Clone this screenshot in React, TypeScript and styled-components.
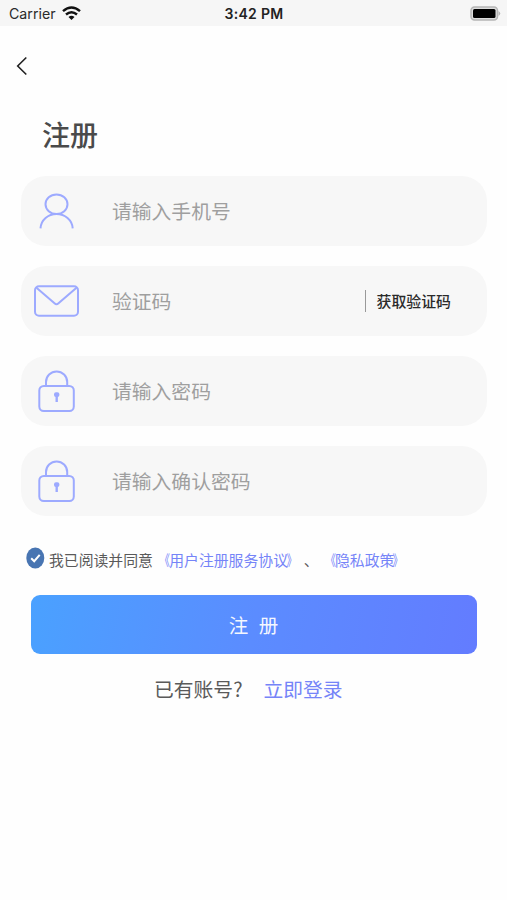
import React from "react";
import styled, { createGlobalStyle } from "styled-components";

const GlobalStyle = createGlobalStyle`
  * { box-sizing: border-box; }
  body { margin: 0; background: #fefefe; font-family: "Noto Sans CJK SC", sans-serif; }
  button, input { font-family: inherit; border: 0; padding: 0; background: none; outline: none; }
`;

const Screen = styled.div`
  width: 100%;
  height: 900px;
  display: flex;
  flex-direction: column;
  background: #fefefe;
  overflow: hidden;
`;

const StatusBar = styled.header`
  height: 26px;
  padding: 2px 8px 0 9px;
  display: grid;
  grid-template-columns: 1fr auto 1fr;
  align-items: center;
  background: #f6f6f6;
  font-family: Inter, sans-serif;
  font-size: 14px;
  line-height: 24px;
`;

const Carrier = styled.div`
  display: flex;
  align-items: center;
  gap: 6px;
  color: #2a2a2a;
  font-size: 14.2px;
  svg { margin-top: -3px; }
`;

const Clock = styled.div`
  color: #222;
  font-weight: 600;
  font-size: 14px;
  letter-spacing: 0.3px;
`;

const BatterySlot = styled.div`
  display: flex;
  justify-content: flex-end;
  margin: -2px -2px 0 0;
`;

const NavBar = styled.nav`
  height: 80px;
  padding: 0 16px;
  display: flex;
  align-items: center;
`;

const BackButton = styled.button`
  width: 12px;
  height: 20px;
  display: flex;
`;

const Title = styled.h1`
  margin: 8px 0 21px 42px;
  font-size: 28px;
  line-height: 41px;
  font-weight: 500;
  color: #4a4a4a;
`;

const Form = styled.form`
  margin: 0 20px 0 21px;
  display: flex;
  flex-direction: column;
  gap: 20px;
`;

const Field = styled.label`
  height: 70px;
  border-radius: 25px;
  display: flex;
  align-items: center;
  background: #f7f7f7;
`;

const FieldIcon = styled.span`
  width: 71px;
  height: 70px;
  flex: none;
  svg { display: block; }
`;

const FieldInput = styled.input`
  flex: 1;
  min-width: 0;
  height: 40px;
  margin: 0 0 1px 20px;
  font-size: 19.8px;
  color: #454545;
  &::placeholder { color: #9f9f9f; opacity: 1; }
`;

const CodeButton = styled.button`
  height: 22px;
  margin-right: 36px;
  padding-left: 11px;
  border-left: 1.5px solid #999;
  font-size: 14.9px;
  line-height: 20px;
  font-weight: 500;
  color: #2a2a2a;
`;

const Agreement = styled.div`
  height: 30px;
  margin: 28px 0 21px 26px;
  display: flex;
  align-items: center;
  font-size: 14.85px;
  line-height: 22px;
  color: #5a5a5a;
  white-space: nowrap;
  svg { flex: none; margin: -3px 4px 0 0; }
`;

const AgreementText = styled.span`
  padding-top: 2px;
`;

const Link = styled.a`
  color: #7584f8;
`;

const PolicyLink = styled(Link)`
  margin: 0 1px 0 1.5px;
`;

const Bracket = styled.span<{ $side: "left" | "right" }>`
  display: inline-block;
  transform: ${({ $side }) => ($side === "left" ? "translateX(1px)" : "translateX(-1.5px)")} scaleX(0.7);
  transform-origin: ${({ $side }) => ($side === "left" ? "right" : "left")} center;
`;

const SubmitButton = styled.button`
  height: 59px;
  margin: 0 30px 0 31px;
  border-radius: 9px;
  background: linear-gradient(100deg, #4aa1ff 0%, #5b8cff 50%, #637cff 100%);
  color: #f4f7ff;
  font-size: 19.5px;
  word-spacing: 6px;
  padding: 0 1px 1px 0;
`;

const LoginRow = styled.div`
  margin: 20px 0 0 154px;
  display: flex;
  gap: 21px;
  font-size: 19.8px;
  line-height: 30px;
  color: #5a5a5a;
`;

const stroke = "#9daaff";

const UserIcon = () => (
  <svg width="71" height="70" fill="none" stroke={stroke} strokeWidth="2">
    <ellipse cx="35.5" cy="28.3" rx="11" ry="9.8" />
    <path d="M19.5 52.4C20 44 27.2 38.1 35.500 38.1S51.200 44 51.700 52.400" />
  </svg>
);

const MailIcon = () => (
  <svg width="71" height="70" fill="none" stroke={stroke} strokeWidth="2" strokeLinejoin="round">
    <rect x="14" y="20.300" width="43" height="29.500" rx="4" />
    <path d="M15.500 21.800L33.500 37.300Q35.500 39.100 37.500 37.300L55.500 21.800" />
  </svg>
);

const LockIcon = () => (
  <svg width="71" height="70" fill="none" stroke={stroke} strokeWidth="2">
    <path d="M25 29.800V26a10.600 10.600 0 0 1 21.200 0v3.800" />
    <rect x="18.300" y="30" width="34.500" height="25" rx="4.500" />
    <rect x="33" y="36.300" width="5.400" height="4.600" rx="2" fill={stroke} stroke="none" />
    <path d="M35.700 40v6" strokeWidth="2.400" />
  </svg>
);

const WifiIcon = () => (
  <svg width="19" height="14" viewBox="0 0 19 14" fill="none" stroke="#111" strokeWidth="2.500">
    <path d="M1 5.100Q9.500-2.100 18 5.100M4 8.500Q9.500 3.900 15 8.500" />
    <path d="M6.500 10.900Q9.500 8.400 12.500 10.900L9.500 13.900Z" fill="#111" stroke="none" />
  </svg>
);

const BatteryIcon = () => (
  <svg width="31" height="15" viewBox="0 0 31 15">
    <rect x="1" y="1" width="26.500" height="13" rx="3.500" fill="#ddd" stroke="#b5b5b5" strokeWidth="1.500" />
    <rect x="3" y="3" width="22.500" height="9" rx="1.500" fill="#000" />
    <path d="M28.500 5Q32 7.500 28.500 10Z" fill="#b5b5b5" />
  </svg>
);

const CheckIcon = () => (
  <svg width="19" height="22" viewBox="0 0 19 22">
    <ellipse cx="9.300" cy="11" rx="9" ry="10.500" fill="#4875b2" />
    <path d="M5.200 11.200L8.200 14.200L13.700 7.800" fill="none" stroke="#fff" strokeWidth="2" />
  </svg>
);

const Policy = ({ name }: { name: string }) => (
  <PolicyLink>
    <Bracket $side="left">《</Bracket>
    {name}
    <Bracket $side="right">》</Bracket>
  </PolicyLink>
);

const fields = [
  { placeholder: "请输入手机号", type: "tel", Icon: UserIcon },
  { placeholder: "验证码", type: "text", Icon: MailIcon, hasCode: true },
  { placeholder: "请输入密码", type: "password", Icon: LockIcon },
  { placeholder: "请输入确认密码", type: "password", Icon: LockIcon },
];

export default function App() {
  return (
    <>
      <GlobalStyle />
      <Screen>
        <StatusBar>
          <Carrier>Carrier<WifiIcon /></Carrier>
          <Clock>3:42 PM</Clock>
          <BatterySlot><BatteryIcon /></BatterySlot>
        </StatusBar>
        <NavBar>
          <BackButton aria-label="返回">
            <svg width="12" height="20" fill="none" stroke="#222" strokeWidth="1.600">
              <path d="M10.300 1.500L1.700 10L10.300 18.500" />
            </svg>
          </BackButton>
        </NavBar>
        <Title>注册</Title>
        <Form>
          {fields.map(({ placeholder, type, Icon, hasCode }) => (
            <Field key={placeholder}>
              <FieldIcon><Icon /></FieldIcon>
              <FieldInput type={type} placeholder={placeholder} />
              {hasCode && <CodeButton type="button">获取验证码</CodeButton>}
            </Field>
          ))}
        </Form>
        <Agreement>
          <CheckIcon />
          <AgreementText>
            我已阅读并同意<Policy name="用户注册服务协议" />、<Policy name="隐私政策" />
          </AgreementText>
        </Agreement>
        <SubmitButton>注 册</SubmitButton>
        <LoginRow>
          <span>已有账号?</span>
          <Link>立即登录</Link>
        </LoginRow>
      </Screen>
    </>
  );
}
